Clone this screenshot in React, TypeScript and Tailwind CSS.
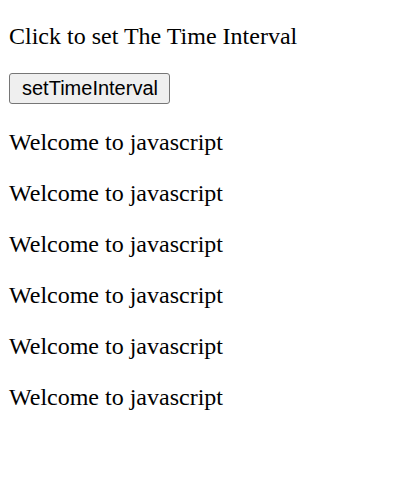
import React from "react";

export default function App() {
  const lines = Array.from({ length: 6 }, (_, i) => i);

  return (
    <div className="min-h-[492px] bg-white px-[9px] pt-[23px] font-['Liberation_Serif',serif] text-[24px] leading-[normal] text-black">
      <p>Click to set The Time Interval</p>
      <div className="mt-[23px] mb-[25px]">
        <button className="h-[31px] rounded-[3px] border border-[#767676] bg-[#efefef] pl-[12px] pr-[11px] font-['Liberation_Sans',Arial,sans-serif] text-[20px] leading-[normal] text-black">
          setTimeInterval
        </button>
      </div>
      <div className="flex flex-col gap-[24px]">
        {lines.map((i) => (
          <p key={i}>Welcome to javascript</p>
        ))}
      </div>
    </div>
  );
}
